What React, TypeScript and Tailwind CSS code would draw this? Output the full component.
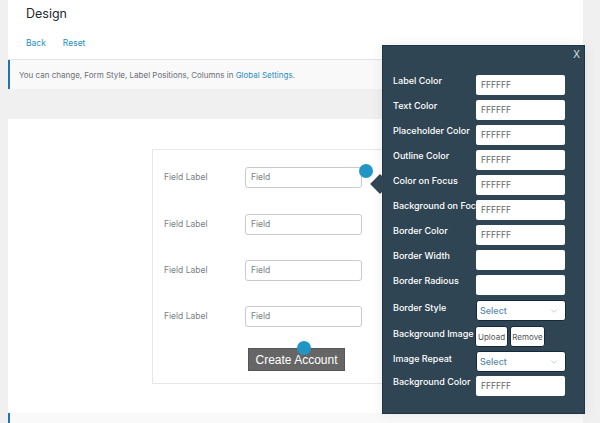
import React from 'react';
import { ChevronDown } from 'lucide-react';

const FONT = 'font-[Inter,"Liberation_Sans",sans-serif]';

const popupRows: { label: string; type: 'input' | 'select' | 'upload'; value?: string }[] = [
  { label: 'Label Color', type: 'input', value: 'FFFFFF' },
  { label: 'Text Color', type: 'input', value: 'FFFFFF' },
  { label: 'Placeholder Color', type: 'input', value: 'FFFFFF' },
  { label: 'Outline Color', type: 'input', value: 'FFFFFF' },
  { label: 'Color on Focus', type: 'input', value: 'FFFFFF' },
  { label: 'Background on Focus', type: 'input', value: 'FFFFFF' },
  { label: 'Border Color', type: 'input', value: 'FFFFFF' },
  { label: 'Border Width', type: 'input' },
  { label: 'Border Radious', type: 'input' },
  { label: 'Border Style', type: 'select' },
  { label: 'Background Image', type: 'upload' },
  { label: 'Image Repeat', type: 'select' },
  { label: 'Background Color', type: 'input', value: 'FFFFFF' },
];

function PopupRow({ row }: { row: (typeof popupRows)[number] }) {
  if (row.type === 'select') {
    return (
      <div className="flex h-[25px] items-start">
        <span className="w-[83px] shrink-0 whitespace-nowrap pt-[1px] text-[9px] leading-[14px] font-medium text-white">{row.label}</span>
        <div className="flex h-[21px] w-[90px] items-center justify-between rounded-[3px] border border-[#13283a] bg-white pl-[3px] pr-[6px]">
          <span className="text-[9px] font-medium text-[#5b8bab]">Select</span>
          <ChevronDown className="size-[10px] text-[#9db4c4]" strokeWidth={1.5} />
        </div>
      </div>
    );
  }
  if (row.type === 'upload') {
    return (
      <div className="mt-[1px] flex h-[25px] items-start">
        <span className="w-[82px] shrink-0 whitespace-nowrap pt-[1px] text-[9px] leading-[14px] font-medium text-white">{row.label}</span>
        <div className="flex gap-[2px]">
          <div className="flex h-[21px] w-[33px] items-center justify-center rounded-[3px] border border-[#13283a] bg-white text-[8px] text-[#555]">Upload</div>
          <div className="flex h-[21px] w-[35px] items-center justify-center rounded-[3px] border border-[#13283a] bg-white text-[8px] text-[#555]">Remove</div>
        </div>
      </div>
    );
  }
  return (
    <div className="flex h-[25px] items-start">
      <span className="-mt-[1px] w-[83px] shrink-0 whitespace-nowrap text-[9px] leading-[14px] font-medium text-white">{row.label}</span>
      <div className="flex h-[20px] w-[89px] items-center rounded-[2px] bg-white px-[5px] text-[8.5px] text-[#666]">{row.value}</div>
    </div>
  );
}

function FieldRow({ mt }: { mt: string }) {
  return (
    <div className={`flex items-center ${mt}`}>
      <span className="w-[81px] shrink-0 text-[8.5px] text-[#7a7f84]">Field Label</span>
      <div className="flex h-[21px] w-[117px] items-center rounded-[3px] border border-[#c8cacc] bg-white px-[5px] text-[8.5px] text-[#7a7f84]">Field</div>
    </div>
  );
}

export default function App() {
  return (
    <div className={`relative h-[423px] w-[600px] overflow-hidden bg-[#f0f0f1] ${FONT}`}>
      <div className="ml-2 w-[575px]">
        <div className="h-[60px] border-b border-[#e2e4e7] bg-white pl-[18px] pt-[6px]">
          <h1 className="text-[12.5px] leading-[16px] text-[#23282d]">Design</h1>
          <div className="mt-[15px] flex gap-[17px] text-[8.5px] leading-[12px] text-[#2a8fbd]">
            <span>Back</span>
            <span>Reset</span>
          </div>
        </div>
        <div className="flex h-[29px] items-center border-l-2 border-[#2271b1] bg-[#f9f9f9] pl-[9px] text-[8px] text-[#6b6f73]">
          <span>You can change, Form Style, Label Positions, Columns in <span className="text-[#2a8fbd]">Global Settings</span>.</span>
        </div>
        <div className="mt-[30px] h-[294px] bg-white pl-[144px] pt-[30px]">
          <div className="h-[235px] w-[300px] border border-[#e6e7e8] pl-[11px] pt-[17px]">
            <FieldRow mt="" />
            <FieldRow mt="mt-[26px]" />
            <FieldRow mt="mt-[25px]" />
            <FieldRow mt="mt-[25px]" />
            <button className="ml-[84px] mt-[21px] flex h-[23px] w-[97px] items-center justify-center border border-[#555] bg-[#666] font-['Liberation_Sans',sans-serif] text-[12px] text-white">
              Create Account
            </button>
          </div>
        </div>
        <div className="h-[10px] border-l-2 border-[#2271b1] bg-[#f9f9f9]" />
      </div>

      <span className="absolute left-[359px] top-[164px] size-[14px] rounded-full bg-[#2196c4]" />
      <span className="absolute left-[297px] top-[341px] size-[14px] rounded-full bg-[#2196c4]" />

      <div className="absolute left-[382px] top-[45px] h-[369px] w-[203px] border border-[#1f3444] bg-[#2f4553] pl-[10px] pt-[29px] shadow-[0_0_12px_rgba(0,0,0,0.08)]">
        <span className="absolute right-[4px] top-[2px] font-['Liberation_Sans',sans-serif] text-[10px] leading-[14px] text-[#dfe5e9]">X</span>
        <span className="absolute -left-[10px] top-[131px] size-[14px] rotate-45 bg-[#2f4553]" />
        <div className="relative">
          {popupRows.map((row) => (
            <PopupRow key={row.label} row={row} />
          ))}
        </div>
      </div>
    </div>
  );
}
